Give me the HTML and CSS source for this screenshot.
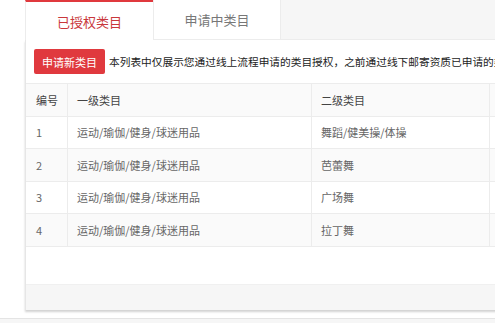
FILE: index.html
```html
<!DOCTYPE html>
<html lang="zh-CN">
<head>
    <meta charset="UTF-8">
    <meta name="viewport" content="width=device-width, initial-scale=1.0">
    <title>类目管理</title>

    <link rel="stylesheet" href="styles.css">
</head>
<body>

    <div class="page">
        <div class="tabs">
            <div class="tab active">已授权类目</div>
            <div class="tab">申请中类目</div>
            <div class="tab-rest"></div>
        </div>

        <div class="panel">
            <div class="toolbar">
                <button class="btn-apply">申请新类目</button>
                <span class="tip">本列表中仅展示您通过线上流程申请的类目授权，之前通过线下邮寄资质已申请的类目不在此列表中展示</span>
            </div>

            <table class="cate">
                <tr class="head">
                    <td class="c-no">编号</td>
                    <td class="c-one">一级类目</td>
                    <td class="c-two">二级类目</td>
                    <td class="c-op"></td>
                </tr>
                <tr>
                    <td>1</td>
                    <td>运动/瑜伽/健身/球迷用品</td>
                    <td>舞蹈/健美操/体操</td>
                    <td></td>
                </tr>
                <tr class="even">
                    <td>2</td>
                    <td>运动/瑜伽/健身/球迷用品</td>
                    <td>芭蕾舞</td>
                    <td></td>
                </tr>
                <tr>
                    <td>3</td>
                    <td>运动/瑜伽/健身/球迷用品</td>
                    <td>广场舞</td>
                    <td></td>
                </tr>
                <tr class="even">
                    <td>4</td>
                    <td>运动/瑜伽/健身/球迷用品</td>
                    <td>拉丁舞</td>
                    <td></td>
                </tr>
            </table>

            <div class="blank"></div>
            <div class="panel-foot"></div>
        </div>

        <div class="page-foot"></div>
    </div>

</body>
</html>
```

FILE: styles.css
```css
body{
    margin: 0;
    width: 495px;
    height: 323px;
    overflow: hidden;
    background: #fff;
    font-family: "Noto Sans CJK SC", "Liberation Sans", sans-serif;
}

.page{
    width: 495px;
    overflow: hidden;
}

.tabs{
    display: flex;
    height: 40px;
    margin-left: 25px;
}

.tab{
    width: 127px;
    height: 40px;
    box-sizing: border-box;
    border-left: 1px solid #ececec;
    border-bottom: 1px solid #ececec;
    background: #fff;

    display: flex;
    justify-content: center;
    align-items: center;
    font-size: 13px;
    color: #777;
}

.tab.active{
    width: 128px;
    border-top: 2px solid #e0393e;
    border-bottom: none;
    color: #c9373b;
}

.tab-rest{
    flex: 1;
    background: #f6f6f6;
    border-left: 1px solid #ececec;
    border-bottom: 1px solid #ececec;
}

.panel{
    width: 620px;
    margin-left: 25px;
    border-left: 1px solid #e6e6e6;
    box-shadow: 0 2px 2px rgba(0, 0, 0, 0.18);
}

.toolbar{
    display: flex;
    align-items: center;
    padding: 9px 8px 9px 8px;
    white-space: nowrap;
}

.btn-apply{
    width: 71px;
    height: 25px;
    border: none;
    border-radius: 2px;
    background: #e0393e;
    color: #fff;
    font-family: inherit;
    font-size: 11px;
    padding: 0;
    margin-right: 4px;
}

.tip{
    font-size: 10.7px;
    color: #222;
}

.cate{
    width: 100%;
    border-collapse: collapse;
    font-size: 11px;
    color: #666;
}

.cate td{
    height: 31.5px;
    padding: 0 0 0 9px;
    border-top: 1px solid #ececec;
    border-bottom: 1px solid #ececec;
    border-left: 1px solid #ececec;
}

.cate td:first-child{
    border-left: none;
    padding-left: 10px;
}

.cate .head td{
    color: #444;
    background: #fafafa;
}

.cate .even td{
    background: #fafafa;
}

.c-no{
    width: 31px;
}

.c-one{
    width: 234px;
}

.c-two{
    width: 168px;
    padding-left: 8px;
}

.blank{
    height: 37px;
}

.panel-foot{
    height: 25px;
    background: #f6f6f6;
    border-top: 1px solid #f0f0f0;
}

.page-foot{
    height: 6px;
    margin-top: 8px;
    border-top: 1px solid #e4e4e4;
    background: #f6f6f6;
}
```
